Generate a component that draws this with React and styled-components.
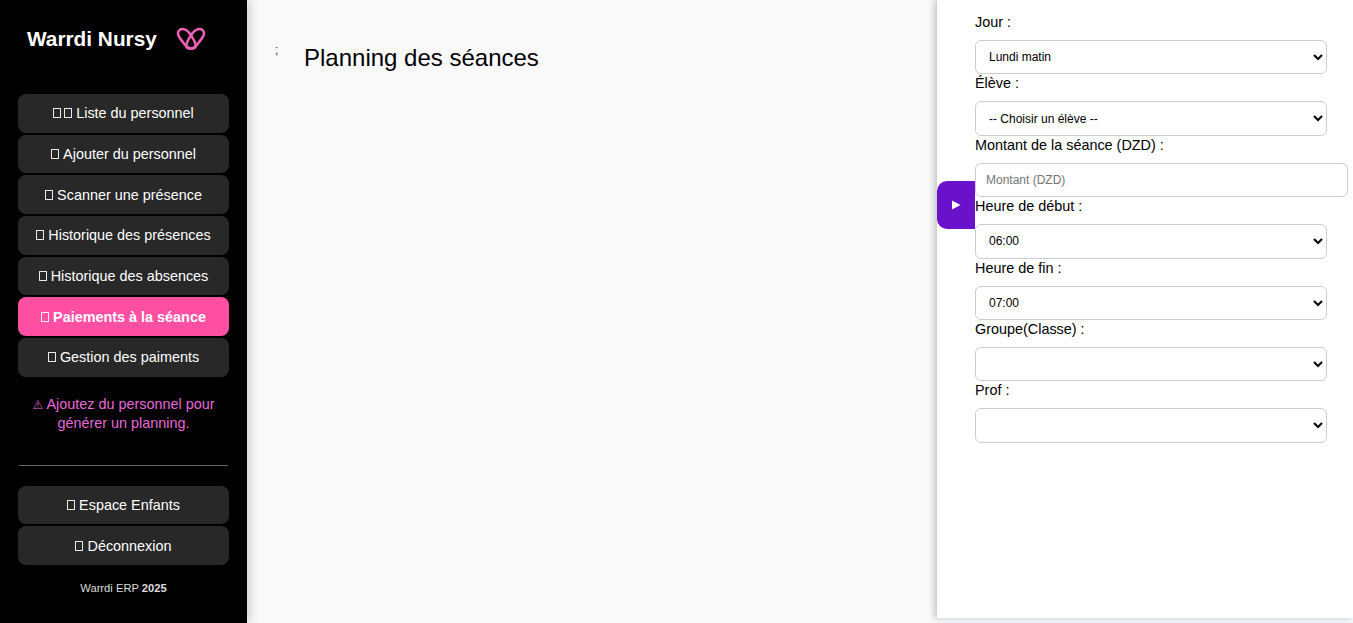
import React from 'react';
import styled, { createGlobalStyle } from 'styled-components';

const GlobalStyle = createGlobalStyle`
  html, body {
    margin: 0;
    height: 623px;
    overflow: hidden;
    background: #f4f6fb;
    font-family: "Liberation Sans", Arial, sans-serif;
  }
  * { box-sizing: border-box; }
`;

const Layout = styled.div`
  display: flex;
  height: 623px;
  overflow: hidden;
`;

const Sidebar = styled.aside`
  position: relative;
  z-index: 2;
  flex: 0 0 247px;
  height: 623px;
  background: #000;
  padding: 0 18px;
  display: flex;
  flex-direction: column;
  box-shadow: 2px 0 10px rgba(0, 0, 0, 0.2);
`;

const Brand = styled.div`
  display: flex;
  align-items: center;
  height: 94px;
  padding: 0 0 16px 9px;
  gap: 19px;
`;

const BrandName = styled.h2`
  margin: 0;
  color: #fff;
  font-size: 20.8px;
  font-weight: 700;
  white-space: nowrap;
`;

const Nav = styled.nav`
  display: flex;
  flex-direction: column;
  gap: 2px;
`;

const NavButton = styled.button`
  height: 38.67px;
  border: 0;
  border-radius: 8px;
  padding: 0;
  display: flex;
  align-items: center;
  justify-content: center;
  gap: 4px;
  background: ${(p) => (p.$active ? '#ff4fa3' : '#282828')};
  color: #fff;
  font-family: inherit;
  font-size: 14.4px;
  font-weight: ${(p) => (p.$active ? 700 : 400)};
  white-space: nowrap;
`;

const Tofu = styled.span`
  display: inline-block;
  width: 8px;
  height: 10px;
  margin-top: 1px;
  margin-right: ${(p) => (p.$tight ? '-1px' : '0')};
  border: 1px solid currentColor;
  opacity: 0.9;
`;

const Notice = styled.p`
  margin: 18px 0 0;
  color: #e868d8;
  font-size: 14.4px;
  line-height: 18px;
  text-align: center;
`;

const Warn = styled.span`
  font-family: "DejaVu Sans", sans-serif;
  font-size: 12px;
`;

const Rule = styled.hr`
  width: 209px;
  margin: 33px auto 20px;
  border: 0;
  border-top: 1px solid #666;
`;

const Footer = styled.p`
  margin: 17px 0 0;
  color: #ddd;
  font-size: 11.2px;
  font-weight: 400;
  text-align: center;
  & b { font-weight: 700; }
`;

const Main = styled.main`
  flex: 1;
  height: 623px;
  background: #f9f9f9;
  display: flex;
  align-items: flex-start;
  padding: 44px 0 0 28px;
`;

const Semi = styled.span`
  color: #333;
  font-size: 12px;
  line-height: 12px;
  width: 29px;
`;

const Title = styled.h1`
  margin: 0;
  color: #000;
  font-size: 24px;
  font-weight: 400;
  line-height: 28px;
`;

const Panel = styled.section`
  position: relative;
  flex: 0 0 416px;
  height: 618px;
  background: #fff;
  padding: 13px 0 0 38px;
  box-shadow: -3px 0 6px rgba(0, 0, 0, 0.2);
`;

const Toggle = styled.div`
  position: absolute;
  left: 0;
  top: 181px;
  width: 38px;
  height: 48px;
  background: #6a11cb;
  border-radius: 10px 0 0 10px;
  display: flex;
  align-items: center;
  justify-content: center;
`;

const Form = styled.form`
  display: flex;
  flex-direction: column;
`;

const Label = styled.label`
  display: block;
  height: 19px;
  margin-bottom: 8.4px;
  color: #000;
  font-size: 14.4px;
  line-height: 18px;
`;

const Field = styled.div`
  display: flex;
  flex-direction: column;
  height: 61.4px;
`;

const Select = styled.select`
  width: 352px;
  height: 35px;
  padding: 0 9px;
  border: 1px solid #ccc;
  border-radius: 6px;
  background-color: #fff;
  color: #000;
  font-family: inherit;
  font-size: 12px;
`;

const Input = styled.input`
  width: 373px;
  height: 35px;
  padding: 0 10px;
  border: 1px solid #ccc;
  border-radius: 6px;
  font-family: inherit;
  font-size: 12px;
  &::placeholder { color: #757575; }
`;

const topLinks = [
  { boxes: 2, label: 'Liste du personnel' },
  { boxes: 1, label: 'Ajouter du personnel' },
  { boxes: 1, label: 'Scanner une présence' },
  { boxes: 1, label: 'Historique des présences' },
  { boxes: 1, label: 'Historique des absences' },
  { boxes: 1, label: 'Paiements à la séance', active: true },
  { boxes: 1, label: 'Gestion des paiments' },
];

const bottomLinks = ['Espace Enfants', 'Déconnexion'];

function Logo() {
  return (
    <svg width="30" height="24" viewBox="0 0 30 24" fill="none" stroke="#f060b8" strokeWidth="2.6" strokeLinejoin="round">
      <path d="M15 21.5 C12 21.5 10.5 20 8 16.5 C5 12.5 2 9.5 2 6.5 C2 3.5 4.2 2 6.8 2 C11 2 14 6 17 11.5 C19 15 20 18 19.5 19.5 C19 21 17 21.5 15 21.5 Z" />
      <path d="M15 21.5 C18 21.5 19.5 20 22 16.5 C25 12.5 28 9.5 28 6.5 C28 3.5 25.8 2 23.2 2 C19 2 16 6 13 11.5 C11 15 10 18 10.5 19.5 C11 21 13 21.5 15 21.5 Z" />
    </svg>
  );
}

function Link({ boxes = 1, label, active }) {
  return (
    <NavButton type="button" $active={active}>
      <span>
        {Array.from({ length: boxes }).map((_, i) => (
          <Tofu key={i} style={{ marginLeft: i ? 3 : 0 }} />
        ))}
      </span>
      {label}
    </NavButton>
  );
}

export default function App() {
  return (
    <Layout>
      <GlobalStyle />
      <Sidebar>
        <Brand>
          <BrandName>Warrdi Nursy</BrandName>
          <Logo />
        </Brand>
        <Nav>
          {topLinks.map((l) => (
            <Link key={l.label} {...l} />
          ))}
        </Nav>
        <Notice>
          <Warn>⚠</Warn> Ajoutez du personnel pour générer un planning.
        </Notice>
        <Rule />
        <Nav>
          {bottomLinks.map((label) => (
            <Link key={label} label={label} />
          ))}
        </Nav>
        <Footer>
          Warrdi ERP <b>2025</b>
        </Footer>
      </Sidebar>
      <Main style={{ flex: '0 0 690px' }}>
        <Semi>;</Semi>
        <Title>Planning des séances</Title>
      </Main>
      <Panel>
        <Toggle>
          <svg width="10" height="10" viewBox="0 0 10 10">
            <path d="M1 0.5 L9.5 5 L1 9.5 Z" fill="#fff" />
          </svg>
        </Toggle>
        <Form>
          <Field>
            <Label>Jour :</Label>
            <Select defaultValue="Lundi matin">
              <option>Lundi matin</option>
            </Select>
          </Field>
          <Field>
            <Label>Élève :</Label>
            <Select>
              <option>-- Choisir un élève --</option>
            </Select>
          </Field>
          <Field>
            <Label>Montant de la séance (DZD) :</Label>
            <Input placeholder="Montant (DZD)" />
          </Field>
          <Field>
            <Label>Heure de début :</Label>
            <Select>
              <option>06:00</option>
            </Select>
          </Field>
          <Field>
            <Label>Heure de fin :</Label>
            <Select>
              <option>07:00</option>
            </Select>
          </Field>
          <Field>
            <Label>Groupe(Classe) :</Label>
            <Select>
              <option></option>
            </Select>
          </Field>
          <Field>
            <Label>Prof :</Label>
            <Select>
              <option></option>
            </Select>
          </Field>
        </Form>
      </Panel>
    </Layout>
  );
}
